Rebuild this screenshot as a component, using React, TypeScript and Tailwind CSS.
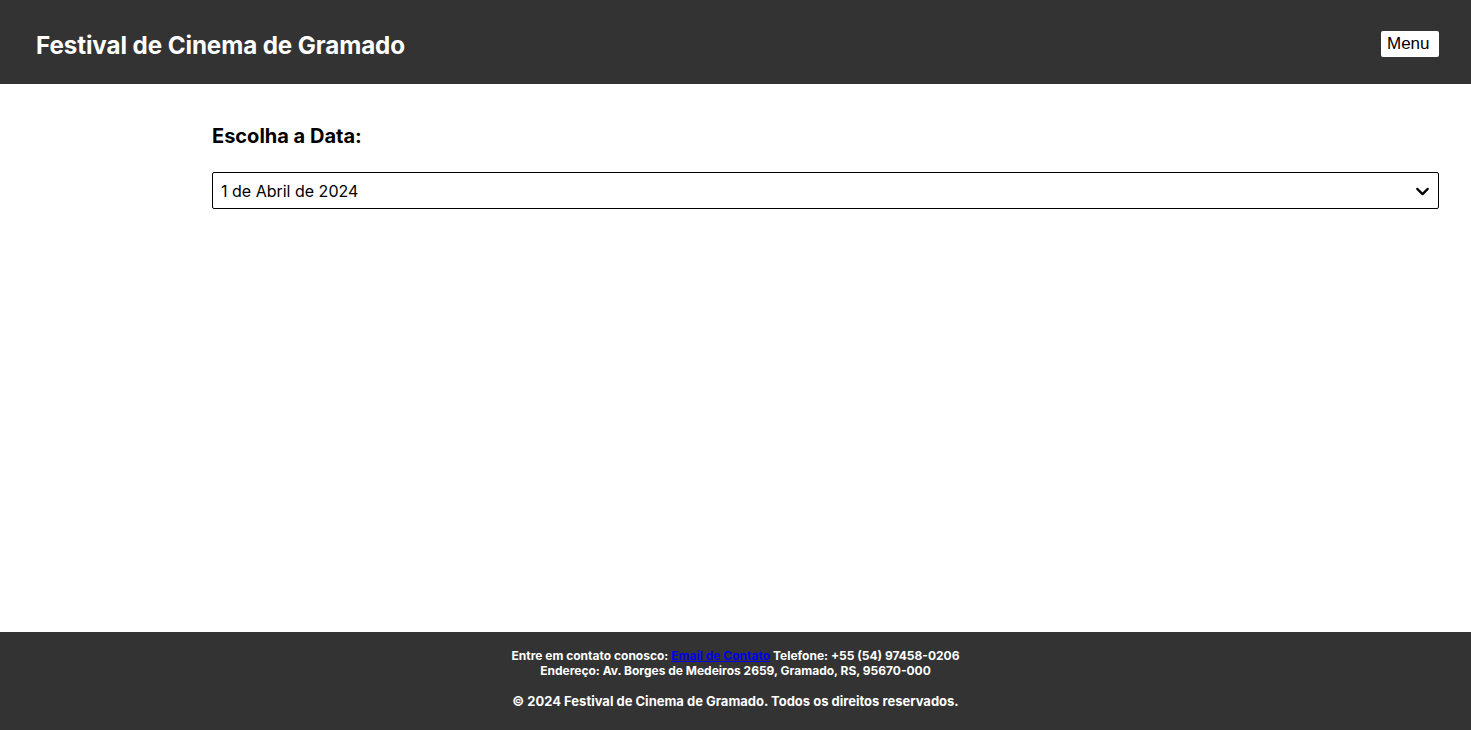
import { ChevronDown } from 'lucide-react';

export default function App() {
  return (
    <div className="min-h-screen flex flex-col bg-white font-['Inter',sans-serif]">
      <header className="h-[84px] bg-[#333333] flex items-center justify-between pl-9 pr-8">
        <h1 className="mt-2 text-white text-[24.2px] font-bold tracking-[-0.1px]">Festival de Cinema de Gramado</h1>
        <button className="mt-[4px] h-[26px] w-[58px] bg-white text-black text-[17px] leading-[26px] pl-[6px] pr-[10px] rounded-[2px] font-['Liberation_Sans',Arial,sans-serif]">
          Menu
        </button>
      </header>

      <main className="flex-1 pl-[212px] pr-8 pt-[40px]">
        <h2 className="text-[20px] font-bold text-black leading-6">Escolha a Data:</h2>
        <div className="relative mt-[24px]">
          <select className="w-full h-[37px] appearance-none border border-black rounded-[2px] pl-2 pr-8 text-[16px] text-black bg-white font-['Inter',sans-serif]">
            <option>1 de Abril de 2024</option>
            <option>2 de Abril de 2024</option>
            <option>3 de Abril de 2024</option>
          </select>
          <ChevronDown className="absolute right-[6px] top-[9px] h-[21px] w-[21px] text-black pointer-events-none" strokeWidth={2.6} />
        </div>
      </main>

      <footer className="h-[98px] bg-[#333333] text-white text-[12px] font-bold text-center pt-[16px] leading-[15px]">
        <p>
          Entre em contato conosco: <a href="#" className="text-[#0000ee] underline">Email de Contato</a> Telefone: +55 (54) 97458-0206
        </p>
        <p>Endereço: Av. Borges de Medeiros 2659, Gramado, RS, 95670-000</p>
        <p className="mt-[14px] text-[13px] leading-[18px]">© 2024 Festival de Cinema de Gramado. Todos os direitos reservados.</p>
      </footer>
    </div>
  );
}
